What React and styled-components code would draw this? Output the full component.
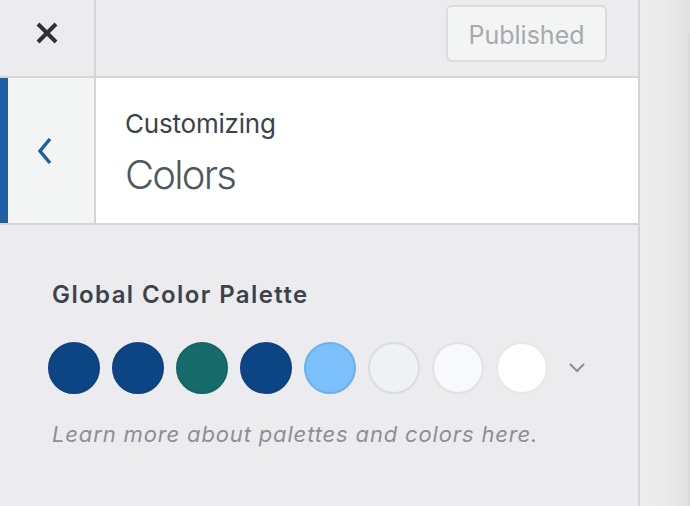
import React from "react";
import styled, { createGlobalStyle } from "styled-components";

const Global = createGlobalStyle`
  html, body { margin: 0; padding: 0; }
  body {
    width: 690px; height: 506px; overflow: hidden;
    font-family: Inter, "Noto Sans", "Liberation Sans", sans-serif;
    background: #e9e9ea;
  }
`;

const Page = styled.div`
  display: flex;
  width: 690px;
  height: 506px;
`;

const Sidebar = styled.div`
  width: 640px;
  flex-shrink: 0;
  box-sizing: border-box;
  height: 100%;
  background: #ececee;
  border-right: 2px solid #d5d5d7;
  display: flex;
  flex-direction: column;
`;

const Preview = styled.div`
  flex: 1;
  position: relative;
  background: linear-gradient(90deg, #eeeeef 0%, #eaeaeb 50%, #e2e2e3 100%);
`;

const FrameEdge = styled.div`
  position: absolute;
  right: 0;
  top: 33px;
  bottom: 0;
  width: 2px;
  background: #dadadb;
`;

const TopBar = styled.div`
  height: 78px;
  box-sizing: border-box;
  display: flex;
  border-bottom: 2px solid #d5d5d7;
`;

const CloseButton = styled.div`
  width: 96px;
  flex-shrink: 0;
  border-right: 2px solid #d5d5d7;
  display: flex;
  align-items: center;
  justify-content: center;
  padding-bottom: 11px;
  box-sizing: border-box;
`;

const TopRight = styled.div`
  flex: 1;
  display: flex;
  justify-content: flex-end;
  align-items: flex-start;
  padding: 5px 31px 0 0;
`;

const PublishedButton = styled.div`
  width: 161px;
  height: 57px;
  box-sizing: border-box;
  border: 2px solid #dcdcde;
  border-radius: 6px;
  background: #f3f4f4;
  color: #a7aaad;
  font-size: 25px;
  padding-top: 3px;
  display: flex;
  align-items: center;
  justify-content: center;
`;

const Header = styled.div`
  height: 147px;
  box-sizing: border-box;
  display: flex;
  border-bottom: 2px solid #d5d5d7;
  background: #fff;
`;

const BackButton = styled.div`
  width: 96px;
  flex-shrink: 0;
  box-sizing: border-box;
  border-left: 8px solid #1f5ea3;
  border-right: 2px solid #d5d5d7;
  background: #f3f5f5;
  display: flex;
  align-items: center;
  justify-content: center;
  padding-right: 12px;
`;

const TitleBlock = styled.div`
  display: flex;
  flex-direction: column;
  padding: 31px 0 0 29px;
`;

const Kicker = styled.div`
  font-size: 26px;
  color: #3c434a;
  line-height: 30px;
  letter-spacing: -0.2px;
`;

const Title = styled.div`
  font-size: 40px;
  font-weight: 300;
  color: #50575e;
  line-height: 44px;
  margin-top: 14px;
  letter-spacing: -1.8px;
`;

const Content = styled.div`
  padding: 56px 0 0 52px;
  display: flex;
  flex-direction: column;
`;

const Label = styled.div`
  font-size: 24px;
  font-weight: 600;
  color: #3c434a;
  line-height: 28px;
  letter-spacing: 1.4px;
`;

const Swatches = styled.div`
  display: flex;
  align-items: center;
  gap: 12px;
  margin: 33px 0 0 -4px;
`;

const Swatch = styled.div`
  width: 52px;
  height: 52px;
  border-radius: 50%;
  box-sizing: border-box;
  background: ${(p) => p.$color};
  border: 2px solid ${(p) => p.$border || p.$color};
`;

const Expand = styled.div`
  width: 40px;
  display: flex;
  justify-content: center;
  margin-left: -3px;
`;

const Help = styled.div`
  font-size: 22px;
  font-style: italic;
  color: #8c8f94;
  margin-top: 27px;
  line-height: 26px;
  letter-spacing: 0.85px;
`;

const swatches = [
  { c: "#0c4583", b: "#0e4280" },
  { c: "#0c4583", b: "#0e4280" },
  { c: "#176b6b", b: "#166565" },
  { c: "#0c4583", b: "#0e4280" },
  { c: "#7cc0fb", b: "#6cb1ea" },
  { c: "#eff2f4", b: "#dcdcde" },
  { c: "#f8f9fa", b: "#e2e2e4" },
  { c: "#ffffff", b: "#e8e8ea" },
];

export default function App() {
  return (
    <>
      <Global />
      <Page>
        <Sidebar>
          <TopBar>
            <CloseButton>
              <svg width="22" height="22" viewBox="0 0 22 22">
                <path d="M2 2 L20 20 M20 2 L2 20" stroke="#2c3338" strokeWidth="4" strokeLinecap="butt" />
              </svg>
            </CloseButton>
            <TopRight>
              <PublishedButton>Published</PublishedButton>
            </TopRight>
          </TopBar>
          <Header>
            <BackButton>
              <svg width="16" height="28" viewBox="0 0 16 28">
                <path d="M13 2 L3 14 L13 26" fill="none" stroke="#1f5ea3" strokeWidth="3.5" />
              </svg>
            </BackButton>
            <TitleBlock>
              <Kicker>Customizing</Kicker>
              <Title>Colors</Title>
            </TitleBlock>
          </Header>
          <Content>
            <Label>Global Color Palette</Label>
            <Swatches>
              {swatches.map((s, i) => (
                <Swatch key={i} $color={s.c} $border={s.b} />
              ))}
              <Expand>
                <svg width="18" height="12" viewBox="0 0 18 12">
                  <path d="M2 2 L9 9 L16 2" fill="none" stroke="#8c8f94" strokeWidth="2" />
                </svg>
              </Expand>
            </Swatches>
            <Help>Learn more about palettes and colors here.</Help>
          </Content>
        </Sidebar>
        <Preview>
          <FrameEdge />
        </Preview>
      </Page>
    </>
  );
}
